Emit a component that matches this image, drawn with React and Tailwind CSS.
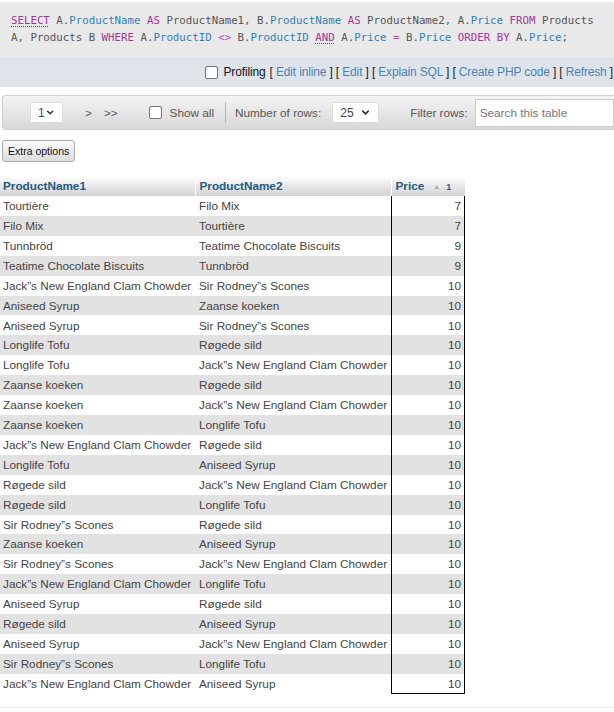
import { ChevronDown } from "lucide-react";

const rows = [
  ["Tourtière", "Filo Mix", 7],
  ["Filo Mix", "Tourtière", 7],
  ["Tunnbröd", "Teatime Chocolate Biscuits", 9],
  ["Teatime Chocolate Biscuits", "Tunnbröd", 9],
  ["Jack\u201ds New England Clam Chowder", "Sir Rodney\u201ds Scones", 10],
  ["Aniseed Syrup", "Zaanse koeken", 10],
  ["Aniseed Syrup", "Sir Rodney\u201ds Scones", 10],
  ["Longlife Tofu", "Røgede sild", 10],
  ["Longlife Tofu", "Jack\u201ds New England Clam Chowder", 10],
  ["Zaanse koeken", "Røgede sild", 10],
  ["Zaanse koeken", "Jack\u201ds New England Clam Chowder", 10],
  ["Zaanse koeken", "Longlife Tofu", 10],
  ["Jack\u201ds New England Clam Chowder", "Røgede sild", 10],
  ["Longlife Tofu", "Aniseed Syrup", 10],
  ["Røgede sild", "Jack\u201ds New England Clam Chowder", 10],
  ["Røgede sild", "Longlife Tofu", 10],
  ["Sir Rodney\u201ds Scones", "Røgede sild", 10],
  ["Zaanse koeken", "Aniseed Syrup", 10],
  ["Sir Rodney\u201ds Scones", "Jack\u201ds New England Clam Chowder", 10],
  ["Jack\u201ds New England Clam Chowder", "Longlife Tofu", 10],
  ["Aniseed Syrup", "Røgede sild", 10],
  ["Røgede sild", "Aniseed Syrup", 10],
  ["Aniseed Syrup", "Jack\u201ds New England Clam Chowder", 10],
  ["Sir Rodney\u201ds Scones", "Longlife Tofu", 10],
  ["Jack\u201ds New England Clam Chowder", "Aniseed Syrup", 10],
];

const Kw = ({ children, dotted }) => (
  <span className={`text-[#a0359c] ${dotted ? "underline decoration-dotted decoration-[#555] underline-offset-2" : ""}`}>
    {children}
  </span>
);
const Col = ({ q, name }) => (
  <span>
    <span className="text-[#555]">{q}.</span>
    <span className="text-[#2f7fb7]">{name}</span>
  </span>
);
const Op = ({ children }) => <span className="text-[#c03ec0]">{children}</span>;

const Link = ({ children }) => (
  <>
    <span className="text-[#222]">[ </span>
    <span className="text-[#4a82b4]">{children}</span>
    <span className="text-[#222]"> ]</span>
  </>
);

const Box = () => (
  <span className="inline-block w-[13px] h-[13px] rounded-[2px] border border-[#767676] bg-white" />
);

const Select = ({ value, width }) => (
  <div className={`flex items-center justify-between bg-white border border-[#ddd] rounded-[2px] h-[21px] px-[7px] ${width}`}>
    <span className="text-[#444] text-[12px]">{value}</span>
    <ChevronDown className="w-[11px] h-[11px] text-[#333]" strokeWidth={3.5} />
  </div>
);

const Sep = () => <span className="w-px h-[21px] bg-[#b5b5b5]" />;

export default function App() {
  return (
    <div className="w-[614px] h-[712px] overflow-hidden bg-white text-[12px] text-[#444]" style={{ fontFamily: '"Liberation Sans", Arial, sans-serif' }}>
      <div className="mt-[2px] bg-[#e9e9e9] pl-[11px] pt-[10px] pb-[11px] text-[10.75px] leading-[17px] text-[#555] whitespace-pre" style={{ fontFamily: '"DejaVu Sans Mono", "Liberation Mono", monospace' }}>
        <div>
          <Kw dotted>SELECT</Kw> <Col q="A" name="ProductName" /> <Kw>AS</Kw> ProductName1, <Col q="B" name="ProductName" /> <Kw>AS</Kw> ProductName2, <Col q="A" name="Price" /> <Kw>FROM</Kw> Products
        </div>
        <div>
          A, Products B <Kw>WHERE</Kw> <Col q="A" name="ProductID" /> <Op>&lt;&gt;</Op> <Col q="B" name="ProductID" /> <Kw dotted>AND</Kw> <Col q="A" name="Price" /> <Op>=</Op> <Col q="B" name="Price" /> <Kw>ORDER BY</Kw> <Col q="A" name="Price" />;
        </div>
      </div>

      <div className="h-[30px] bg-[#dfe4ea] flex items-center justify-end pr-[1px] whitespace-nowrap text-[12px] tracking-[-0.15px]">
        <Box />
        <span className="ml-[6px] text-[#111]">Profiling</span>
        <span className="ml-[4px]"><Link>Edit inline</Link> <Link>Edit</Link> <Link>Explain SQL</Link> <Link>Create PHP code</Link> <Link>Refresh</Link></span>
      </div>

      <div className="mt-[8px] ml-[2px] h-[35px] rounded-l-[4px] border border-r-0 border-[#d0d0d0] bg-gradient-to-b from-[#f4f4f4] to-[#d8d8d8] flex items-center text-[11.75px] text-[#555] whitespace-nowrap">
        <div className="ml-[27px]"><Select value="1" width="w-[33px]" /></div>
        <span className="ml-[22px]">&gt;</span>
        <span className="ml-[12px]">&gt;&gt;</span>
        <span className="ml-[16px]"><Sep /></span>
        <span className="ml-[15px] flex"><Box /></span>
        <span className="ml-[8px]">Show all</span>
        <span className="ml-[11px] flex"><Sep /></span>
        <span className="ml-[9px]">Number of rows:</span>
        <div className="ml-[11px]"><Select value="25" width="w-[47px]" /></div>
        <span className="ml-[31px]">Filter rows:</span>
        <div className="ml-[7px] flex-1 h-[28px] bg-white border border-[#ccc] flex items-center px-[4px] text-[#777]">
          Search this table
        </div>
      </div>

      <button className="mt-[10px] ml-[2px] h-[22px] px-[5px] rounded-[3px] border border-[#aaa] bg-gradient-to-b from-[#fafafa] to-[#dcdcdc] text-[10.5px] text-[#111] leading-none">
        Extra options
      </button>

      <table className="mt-[14px] border-collapse text-[11.75px]" style={{ width: 465 }}>
        <thead>
          <tr className="h-[20px] text-left text-[#235a81] font-bold">
            <th className="w-[195px] pl-[3px] bg-gradient-to-b from-white to-[#d2d2d2] border-r border-white">ProductName1</th>
            <th className="w-[196px] pl-[4px] bg-gradient-to-b from-white to-[#d2d2d2] border-r border-white">ProductName2</th>
            <th className="pl-[4px] bg-gradient-to-b from-white to-[#d2d2d2] font-normal">
              <span className="font-bold">Price</span>
              <span className="ml-[9px] text-[7px] text-[#aaa] align-middle">▲</span>
              <span className="ml-[6px] text-[9px] font-bold">1</span>
            </th>
          </tr>
        </thead>
        <tbody>
          {rows.map((r, i) => (
            <tr key={i} className={`h-[19.92px] ${i % 2 ? "bg-[#e2e2e2]" : "bg-white"}`}>
              <td className="pl-[3px] whitespace-nowrap leading-none">{r[0]}</td>
              <td className="pl-[4px] whitespace-nowrap leading-none">{r[1]}</td>
              <td className="pr-[3px] text-right leading-none border-x border-black border-b-0" style={i === rows.length - 1 ? { borderBottom: "1px solid black" } : undefined}>{r[2]}</td>
            </tr>
          ))}
        </tbody>
      </table>

      <div className="mt-[13px] h-px bg-[#ececec]" />
    </div>
  );
}
